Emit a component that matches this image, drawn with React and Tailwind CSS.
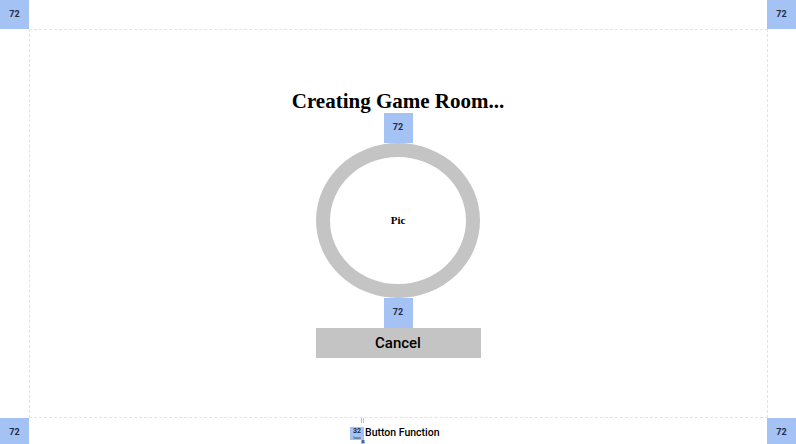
export default function App() {
  const corner =
    "absolute w-[29px] h-[29px] bg-[#a4c2f4] flex items-center justify-center text-[9px] font-bold text-[#1f2a44]";
  return (
    <div className="relative w-full h-[444px] bg-white overflow-hidden font-['Roboto',sans-serif]">
      {/* dashed frame */}
      <div className="absolute left-[29px] top-[29px] right-[28px] bottom-[26px] border border-dashed border-[#e3e3e3]"></div>

      {/* corner markers */}
      <div className={corner + " left-0 top-0"}>72</div>
      <div className={corner + " right-0 top-0"}>72</div>
      <div className={corner + " left-0 top-[418px]"}>72</div>
      <div className={corner + " right-0 top-[418px]"}>72</div>

      {/* main content */}
      <div className="relative flex flex-col items-center pt-[89px]">
        <h1 className="font-['Liberation_Serif',serif] font-bold text-[21px] leading-[24px] text-black">
          Creating Game Room...
        </h1>
        <div className="w-[29px] h-[30px] bg-[#a4c2f4] flex items-center justify-center text-[9px] font-bold text-[#1f2a44]">
          72
        </div>
        <div className="w-[164px] h-[155px] rounded-[50%] border-[14px] border-[#c4c4c4] flex items-center justify-center">
          <span className="font-['Liberation_Serif',serif] font-bold text-[11px] text-black">
            Pic
          </span>
        </div>
        <div className="w-[29px] h-[30px] bg-[#a4c2f4] flex items-center justify-center text-[9px] font-bold text-[#1f2a44]">
          72
        </div>
        <button className="w-[165px] h-[30px] bg-[#c4c4c4] text-black text-[15px] font-medium flex items-center justify-center">
          Cancel
        </button>
      </div>

      {/* bottom button function label */}
      <div className="absolute left-[350px] top-[418px] flex items-start">
        <div className="relative mt-[9px] w-[14px] h-[13px] bg-[#a4c2f4] flex flex-col items-center justify-center leading-none text-[#1f2a44]">
          <span className="text-[7px] font-bold leading-[7px]">32</span>
          <span className="text-[4px] leading-[5px]">Icon</span>
        </div>
        <div className="relative">
          <div className="absolute left-[-3px] top-0 flex gap-[1px]">
            <div className="w-[1px] h-[5px] bg-[#a4c2f4]"></div>
            <div className="w-[1px] h-[5px] bg-[#a4c2f4]"></div>
          </div>
          <div className="absolute left-[-3px] top-[22px] w-[4px] h-[4px] bg-[#a4c2f4] text-[4px] font-bold leading-[4px] text-[#1f2a44] text-center">
            8
          </div>
          <span className="block pl-[1px] pt-[8px] text-[10.5px] font-medium text-black leading-[14px]">
            Button Function
          </span>
        </div>
      </div>
    </div>
  );
}
